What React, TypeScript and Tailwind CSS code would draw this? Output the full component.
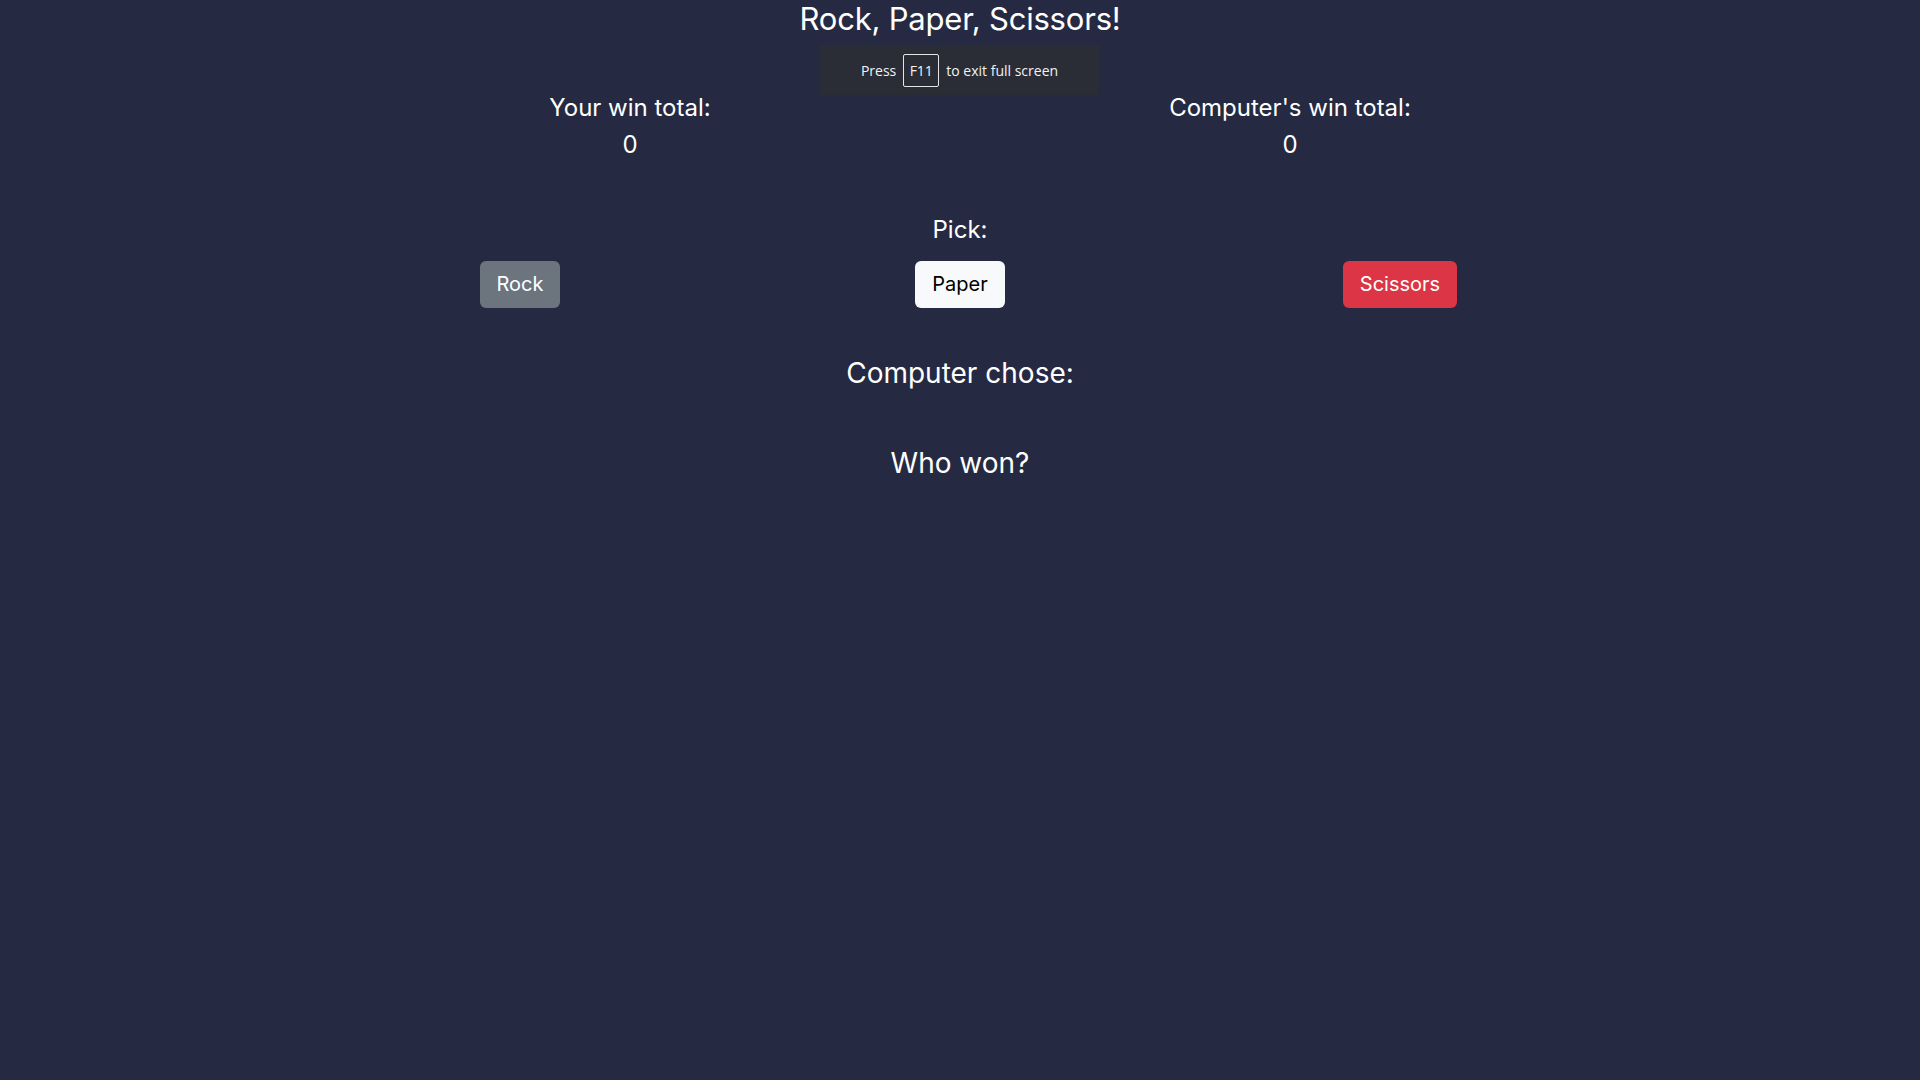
const font = { fontFamily: 'Inter, "Noto Sans", sans-serif' };

function Score({ label, value }: { label: string; value: number }) {
  return (
    <div className="flex-1 flex flex-col items-center">
      <h4 className="text-[24px] leading-[1.2] font-normal mb-2">{label}</h4>
      <h4 className="text-[24px] leading-[1.2] font-normal">{value}</h4>
    </div>
  );
}

export default function App() {
  return (
    <div className="min-h-screen bg-[#252a42] text-white relative" style={font}>
      {/* browser fullscreen hint */}
      <div className="absolute left-[820px] top-[45px] w-[279px] h-[50px] bg-[#2a2d36] flex items-center justify-center gap-[7px] text-[14px] text-[#f2f2f2] font-['Open_Sans',sans-serif]">
        <span>Press</span>
        <span className="w-[36px] h-[33px] border border-[#e5e5e5] rounded-[2px] flex items-center justify-center">F11</span>
        <span>to exit full screen</span>
      </div>

      <div className="max-w-[1320px] mx-auto text-center">
        <h1 className="text-[31px] leading-[1.24] font-normal tracking-[-0.2px]">Rock, Paper, Scissors!</h1>

        <div className="flex mt-[56px]">
          <Score label="Your win total:" value={0} />
          <Score label="Computer's win total:" value={0} />
        </div>

        <h4 className="text-[24px] leading-[1.2] font-normal mt-[56px]">Pick:</h4>

        <div className="flex mt-[16px]">
          <div className="flex-1 flex justify-center">
            <button className="h-[47px] px-[17px] rounded-[6px] bg-[#6c757d] text-white text-[20px]">Rock</button>
          </div>
          <div className="flex-1 flex justify-center">
            <button className="h-[47px] px-[17px] rounded-[6px] bg-[#f8f9fa] text-black text-[20px]">Paper</button>
          </div>
          <div className="flex-1 flex justify-center">
            <button className="h-[47px] px-[17px] rounded-[6px] bg-[#dc3545] text-white text-[20px]">Scissors</button>
          </div>
        </div>

        <h3 className="text-[28px] leading-[1.2] font-normal mt-[49px]">Computer chose:</h3>
        <h3 className="text-[28px] leading-[1.2] font-normal mt-[57px]">Who won?</h3>
      </div>
    </div>
  );
}
